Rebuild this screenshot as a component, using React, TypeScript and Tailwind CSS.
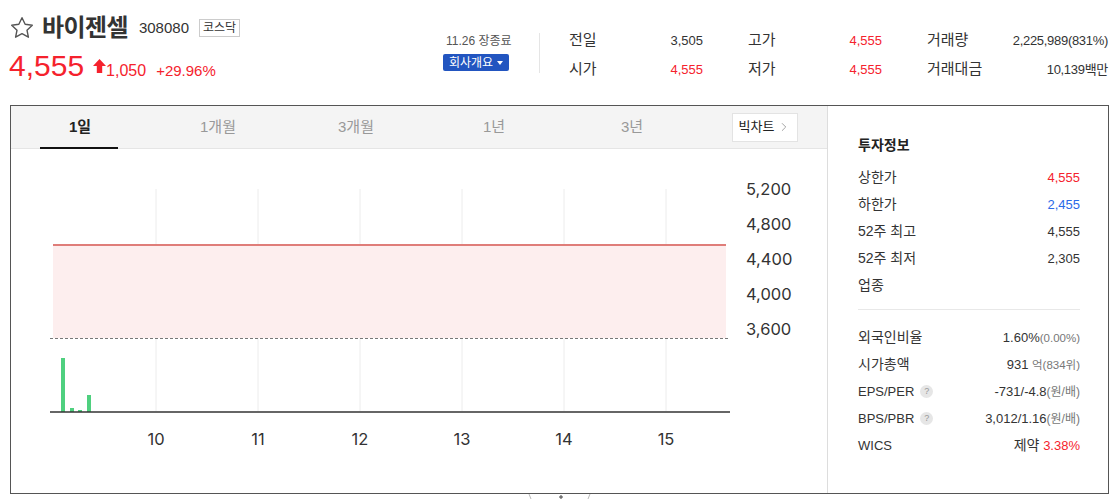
import { ChevronRight } from "lucide-react";

const font = { fontFamily: '"Liberation Sans", "Noto Sans CJK KR", sans-serif' };

const summary = [
  ["전일", "3,505", false, "고가", "4,555", true, "거래량", "2,225,989(831%)"],
  ["시가", "4,555", true, "저가", "4,555", true, "거래대금", "10,139백만"],
] as const;

const tabs = ["1일", "1개월", "3개월", "1년", "3년"];

const info1 = [
  { label: "상한가", value: "4,555", color: "text-[#f5222d]" },
  { label: "하한가", value: "2,455", color: "text-[#2a6ae8]" },
  { label: "52주 최고", value: "4,555", color: "text-[#333]" },
  { label: "52주 최저", value: "2,305", color: "text-[#333]" },
  { label: "업종", value: "", color: "text-[#333]" },
];

const Help = () => (
  <span className="ml-1.5 inline-flex h-[13px] w-[13px] items-center justify-center rounded-full bg-[#e6e6e6] text-[9px] text-[#999]">
    ?
  </span>
);

const Chart = () => {
  const ox = 11;
  const oy = 149;
  const grid = [156, 258, 360, 462, 564, 666];
  const ylabels = [
    ["5,200", 189],
    ["4,800", 224],
    ["4,400", 259],
    ["4,000", 294],
    ["3,600", 329],
  ] as const;
  const bars = [
    [61, 358],
    [70, 408],
    [78, 410],
    [87, 395],
  ];
  return (
    <svg width="817" height="343" className="block" style={{ fontFamily: "Inter, sans-serif" }}>
      {grid.map((x) => (
        <line key={x} x1={x - ox} x2={x - ox} y1={189 - oy} y2={411 - oy} stroke="#ececec" strokeWidth="1" />
      ))}
      <rect x={53 - ox} y={245 - oy} width={673} height={93} fill="#fdeeee" />
      <line x1={53 - ox} x2={726 - ox} y1={245 - oy} y2={245 - oy} stroke="#df7d79" strokeWidth="2" />
      <line x1={50 - ox} x2={729 - ox} y1={338.5 - oy} y2={338.5 - oy} stroke="#777" strokeWidth="1" strokeDasharray="3 2" />
      {bars.map(([x, y]) => (
        <rect key={x} x={x - ox} y={y - oy} width={4} height={412 - y} fill="#4fd07f" />
      ))}
      <line x1={50 - ox} x2={730 - ox} y1={412 - oy} y2={412 - oy} stroke="#333" strokeWidth="1.5" />
      {ylabels.map(([t, y]) => (
        <text key={t} x={746 - ox} y={y - oy + 6} fontSize="16.5" fill="#333">
          {t}
        </text>
      ))}
      {grid.map((x, i) => (
        <text key={x} x={x - ox} y={445 - oy} fontSize="16.5" fill="#333" textAnchor="middle">
          {10 + i}
        </text>
      ))}
    </svg>
  );
};

export default function App() {
  return (
    <div className="relative h-[499px] w-[1115px] overflow-hidden bg-white text-[#333]" style={font}>
      {/* header */}
      <div className="flex h-[105px]">
        <div className="w-[443px] pl-[9px] pt-[10px]">
          <div className="flex items-center">
            <svg width="26" height="26" viewBox="0 0 24 24" className="mr-[7px]">
              <path
                d="M12 2.5l2.9 6.1 6.6.8-4.9 4.6 1.3 6.5L12 17.3l-5.9 3.2 1.3-6.5-4.9-4.6 6.6-.8z"
                fill="none"
                stroke="#555"
                strokeWidth="1.3"
                strokeLinejoin="round"
              />
            </svg>
            <span className="text-[24px] font-bold tracking-tight text-[#333]">바이젠셀</span>
            <span className="ml-[11px] text-[15px] text-[#333]">308080</span>
            <span className="ml-[10px] border border-[#ccc] px-[3px] text-[12px] leading-[16px] text-[#333]">코스닥</span>
          </div>
          <div className="mt-[1px] flex items-baseline text-[#f5222d]">
            <span className="text-[30px] leading-[38px]">4,555</span>
            <svg width="13" height="14" viewBox="0 0 13 14" className="ml-[9px] self-center">
              <path d="M6.5 0L13 7H9.2V14H3.8V7H0Z" fill="#f5222d" />
            </svg>
            <span className="text-[16px]">1,050</span>
            <span className="ml-[10px] text-[15px]">+29.96%</span>
          </div>
        </div>

        <div className="flex w-[96px] flex-col items-start pt-[32px]">
          <span className="ml-[3px] text-[12px] text-[#555]">11.26 장종료</span>
          <span className="mt-[4px] flex h-[17px] w-[66px] items-center justify-center gap-[4px] rounded-[2px] bg-[#2255c0] text-[12px] text-white">
            회사개요
            <svg width="6" height="4" viewBox="0 0 6 4">
              <path d="M0 0h6L3 4z" fill="white" />
            </svg>
          </span>
        </div>

        <div className="mt-[33px] h-[40px] w-px bg-[#e5e5e5]" />

        <div className="ml-[29px] pt-[26px]">
          {summary.map((r) => (
            <div key={r[0]} className="flex h-[29px] items-center">
              <span className="w-[60px] text-[15px]">{r[0]}</span>
              <span className={`w-[74px] text-right text-[13px] ${r[2] ? "text-[#f5222d]" : ""}`}>{r[1]}</span>
              <span className="ml-[45px] w-[60px] text-[15px]">{r[3]}</span>
              <span className={`w-[74px] text-right text-[13px] ${r[5] ? "text-[#f5222d]" : ""}`}>{r[4]}</span>
              <span className="ml-[45px] w-[70px] text-[15px]">{r[6]}</span>
              <span className="w-[111px] text-right text-[13px] tracking-[-0.3px]">{r[7]}</span>
            </div>
          ))}
        </div>
      </div>

      {/* chart box */}
      <div className="ml-[10px] flex h-[389px] w-[1099px] border border-[#555]">
        <div className="w-[817px] border-r border-[#ddd]">
          <div className="flex h-[43px] items-center border-b border-[#e5e5e5] bg-[#f4f4f4]">
            {tabs.map((t, i) => (
              <div key={t} className="relative flex h-full w-[138px] items-center justify-center">
                <span className={i === 0 ? "text-[15px] font-bold text-[#222]" : "text-[15px] text-[#999]"}>{t}</span>
                {i === 0 && <span className="absolute bottom-[-1px] left-[29px] h-[2px] w-[78px] bg-[#111]" />}
              </div>
            ))}
            <div className="ml-[31px] flex h-[29px] w-[66px] items-center justify-center gap-[3px] border border-[#e3e3e3] bg-white text-[13px] text-[#222]">
              빅차트
              <ChevronRight size={14} strokeWidth={1.3} className="text-[#888]" />
            </div>
          </div>
          <Chart />
        </div>

        <div className="flex-1 pl-[30px] pr-[28px] pt-[29px]">
          <div className="mb-[8px] text-[14px] font-bold text-[#222]">투자정보</div>
          {info1.map((r) => (
            <div key={r.label} className="flex h-[27px] items-center justify-between text-[14px]">
              <span>{r.label}</span>
              <span className={`text-[13px] ${r.color}`}>{r.value}</span>
            </div>
          ))}
          <div className="mb-[14px] mt-[10px] h-px bg-[#e8e8e8]" />
          <div className="flex h-[27px] items-center justify-between text-[14px]">
            <span>외국인비율</span>
            <span className="text-[13px]">
              1.60%<span className="text-[11.5px] text-[#777]">(0.00%)</span>
            </span>
          </div>
          <div className="flex h-[27px] items-center justify-between text-[14px]">
            <span>시가총액</span>
            <span className="text-[13px]">
              931 <span className="text-[11.5px] text-[#777]">억(834위)</span>
            </span>
          </div>
          <div className="flex h-[27px] items-center justify-between text-[13px]">
            <span className="flex items-center">
              EPS/PER
              <Help />
            </span>
            <span>
              -731/-4.8<span className="text-[12px] text-[#777]">(원/배)</span>
            </span>
          </div>
          <div className="flex h-[27px] items-center justify-between text-[13px]">
            <span className="flex items-center">
              BPS/PBR
              <Help />
            </span>
            <span>
              3,012/1.16<span className="text-[12px] text-[#777]">(원/배)</span>
            </span>
          </div>
          <div className="flex h-[27px] items-center justify-between text-[13px]">
            <span>WICS</span>
            <span>
              <span className="text-[14px]">제약</span> <span className="text-[#f5222d]">3.38%</span>
            </span>
          </div>
        </div>
      </div>

      {/* fold handle peeking below */}
      <svg width="70" height="6" className="ml-[526px] block">
        <line x1="3" y1="0" x2="5" y2="5" stroke="#bbb" />
        <line x1="64" y1="0" x2="62" y2="5" stroke="#bbb" />
        <line x1="35" y1="1" x2="35" y2="6" stroke="#444" />
        <line x1="33" y1="3" x2="37" y2="3" stroke="#444" />
      </svg>
    </div>
  );
}
